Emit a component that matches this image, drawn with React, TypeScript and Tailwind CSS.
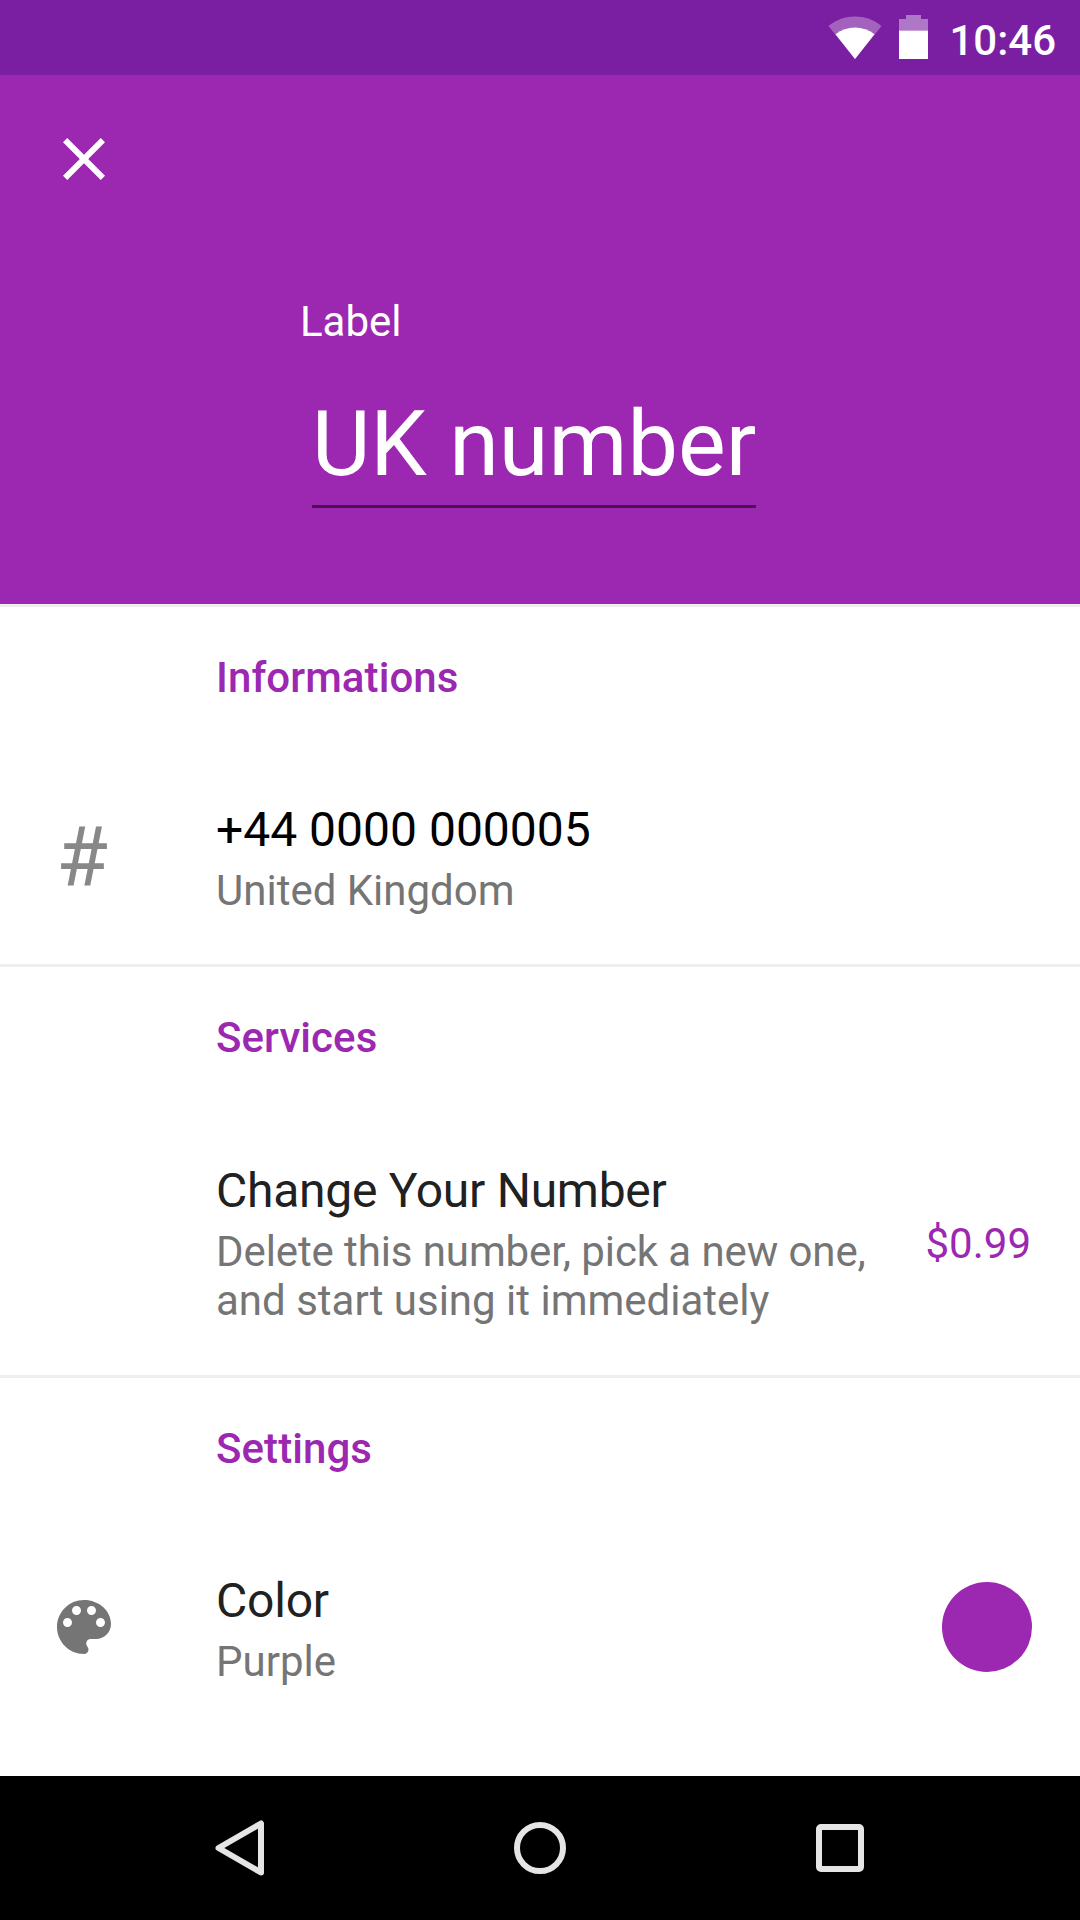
import React from 'react';

interface RowProps {
  className: string;
  icon?: React.ReactNode;
  title: string;
  titleClass: string;
  subtitle: React.ReactNode;
  action?: React.ReactNode;
}

interface SectionProps {
  title: string;
  className: string;
  children: React.ReactNode;
}

const Section: React.FC<SectionProps> = ({ title, className, children }) => (
  <section className={`border-t-3 border-[#eeeeee] pt-[47px] ${className}`}>
    <h2 className="pl-[216px] text-[42px] leading-[48px] font-medium tracking-[0.08px] text-[#9c27b0]">{title}</h2>
    {children}
  </section>
);

const Row: React.FC<RowProps> = ({ className, icon, title, titleClass, subtitle, action }) => (
  <div className={`flex items-center pr-12 ${className}`}>
    <div className="w-[216px] shrink-0 pl-12">
      <div className="flex size-[72px] items-center justify-center">{icon}</div>
    </div>
    <div className="flex-1">
      <div className={`mb-1 text-[48px] leading-[64px] whitespace-nowrap ${titleClass}`}>{title}</div>
      <div className="text-[42px] leading-[49px] whitespace-nowrap text-[#757575]">{subtitle}</div>
    </div>
    {action}
  </div>
);

const StatusBar: React.FC = () => (
  <div className="flex h-[75px] items-start justify-end bg-[#7b1fa2] pr-6 text-white">
    <svg width="54" height="44" viewBox="0 0 54 44" className="mt-[15px] mr-[17px]">
      <path d="M27 44 L0.5 11 C16 -1.6 38 -1.6 53.5 11 Z" fill="#fff" fillOpacity="0.3" />
      <path d="M27 44 L7.5 19.3 C19 10.2 35 10.2 46.5 19.3 Z" fill="#fff" />
    </svg>
    <svg width="29" height="44" viewBox="0 0 29 44" className="mt-[15px] mr-[21px]">
      <path d="M0 4h7V0h15v4h7v11.5H0z" fill="#fff" fillOpacity="0.4" />
      <path d="M0 15.5h29V44H0z" fill="#fff" />
    </svg>
    <span className="mt-[16px] text-[42px] leading-[49px] font-medium">10:46</span>
  </div>
);

const Header: React.FC = () => (
  <header className="h-[529px] bg-[#9c27b0] pt-12 text-white">
    <button className="ml-12 block size-[72px]" aria-label="Close">
      <svg width="72" height="72" viewBox="0 0 24 24" fill="#fff">
        <path d="M19 6.41 17.59 5 12 10.59 6.41 5 5 6.41 10.59 12 5 17.59 6.41 19 12 13.41 17.59 19 19 17.59 13.41 12z" />
      </svg>
    </button>
    <div className="mt-[103px] ml-[300px] text-[42px] leading-[48px]">Label</div>
    <div className="mt-[46px] ml-[312px] w-[444px] border-b-3 border-[#4a1254] pb-[8px] text-[90px] leading-[105px] whitespace-nowrap">
      UK number
    </div>
  </header>
);

const PaletteIcon: React.FC = () => (
  <svg width="72" height="72" viewBox="0 0 24 24" fill="#757575" className="mb-[2px] shrink-0">
    <path d="M12 3c-4.97 0-9 4.03-9 9s4.03 9 9 9c.83 0 1.5-.67 1.5-1.5 0-.39-.15-.74-.39-1.01-.23-.26-.38-.61-.38-.99 0-.83.67-1.5 1.5-1.5H16c2.76 0 5-2.24 5-5 0-4.42-4.03-8-9-8zm-5.5 9c-.83 0-1.5-.67-1.5-1.5S5.67 9 6.5 9 8 9.67 8 10.5 7.33 12 6.5 12zm3-4C8.67 8 8 7.33 8 6.5S8.67 5 9.5 5s1.5.67 1.5 1.5S10.33 8 9.5 8zm5 0c-.83 0-1.5-.67-1.5-1.5S13.67 5 14.5 5s1.5.67 1.5 1.5S15.33 8 14.5 8zm3 4c-.83 0-1.5-.67-1.5-1.5S16.67 9 17.5 9s1.5.67 1.5 1.5-.67 1.5-1.5 1.5z" />
  </svg>
);

const NavBar: React.FC = () => (
  <nav className="flex h-36 items-center justify-center gap-[228px] bg-black">
    <svg width="72" height="72" viewBox="0 0 72 72" fill="none" stroke="#e5e5e5" strokeWidth="6" strokeLinejoin="round">
      <path d="M57 11.5v49L14.5 36z" />
    </svg>
    <svg width="72" height="72" viewBox="0 0 72 72" fill="none" stroke="#e5e5e5" strokeWidth="6">
      <circle cx="36" cy="36" r="23" />
    </svg>
    <svg width="72" height="72" viewBox="0 0 72 72" fill="#e5e5e5">
      <path fillRule="evenodd" d="M17 12h38a5 5 0 0 1 5 5v38a5 5 0 0 1-5 5H17a5 5 0 0 1-5-5V17a5 5 0 0 1 5-5zm1 6v36h36V18z" />
    </svg>
  </nav>
);

const App: React.FC = () => {
  return (
    <div className="flex h-[1920px] w-[1080px] flex-col overflow-hidden bg-white font-['Roboto',sans-serif]">
      <StatusBar />
      <Header />
      <main className="flex-1">
        <Section title="Informations" className="h-[360px]">
          <Row
            className="mt-[96px]"
            icon={<span className="mt-[2px] mr-[4px] text-[84px] leading-[72px] text-[#888888]">#</span>}
            title="+44 0000 000005"
            titleClass="text-black"
            subtitle="United Kingdom"
          />
        </Section>
        <Section title="Services" className="h-[411px]">
          <Row
            className="mt-[97px]"
            title="Change Your Number"
            titleClass="text-[#212121] tracking-[-0.27px]"
            subtitle={
              <>
                <span className="tracking-[-0.1px]">Delete this number, pick a new one,</span>
                <br />
                and start using it immediately
              </>
            }
            action={<span className="mt-[2px] mr-px text-[42px] leading-[49px] text-[#9c27b0]">$0.99</span>}
          />
        </Section>
        <Section title="Settings" className="h-[401px]">
          <Row
            className="mt-[96px]"
            icon={<PaletteIcon />}
            title="Color"
            titleClass="text-[#212121] tracking-[-0.2px]"
            subtitle="Purple"
            action={<span className="mb-[2px] size-[90px] rounded-full bg-[#9c27b0]" />}
          />
        </Section>
      </main>
      <NavBar />
    </div>
  );
};

export default App;
